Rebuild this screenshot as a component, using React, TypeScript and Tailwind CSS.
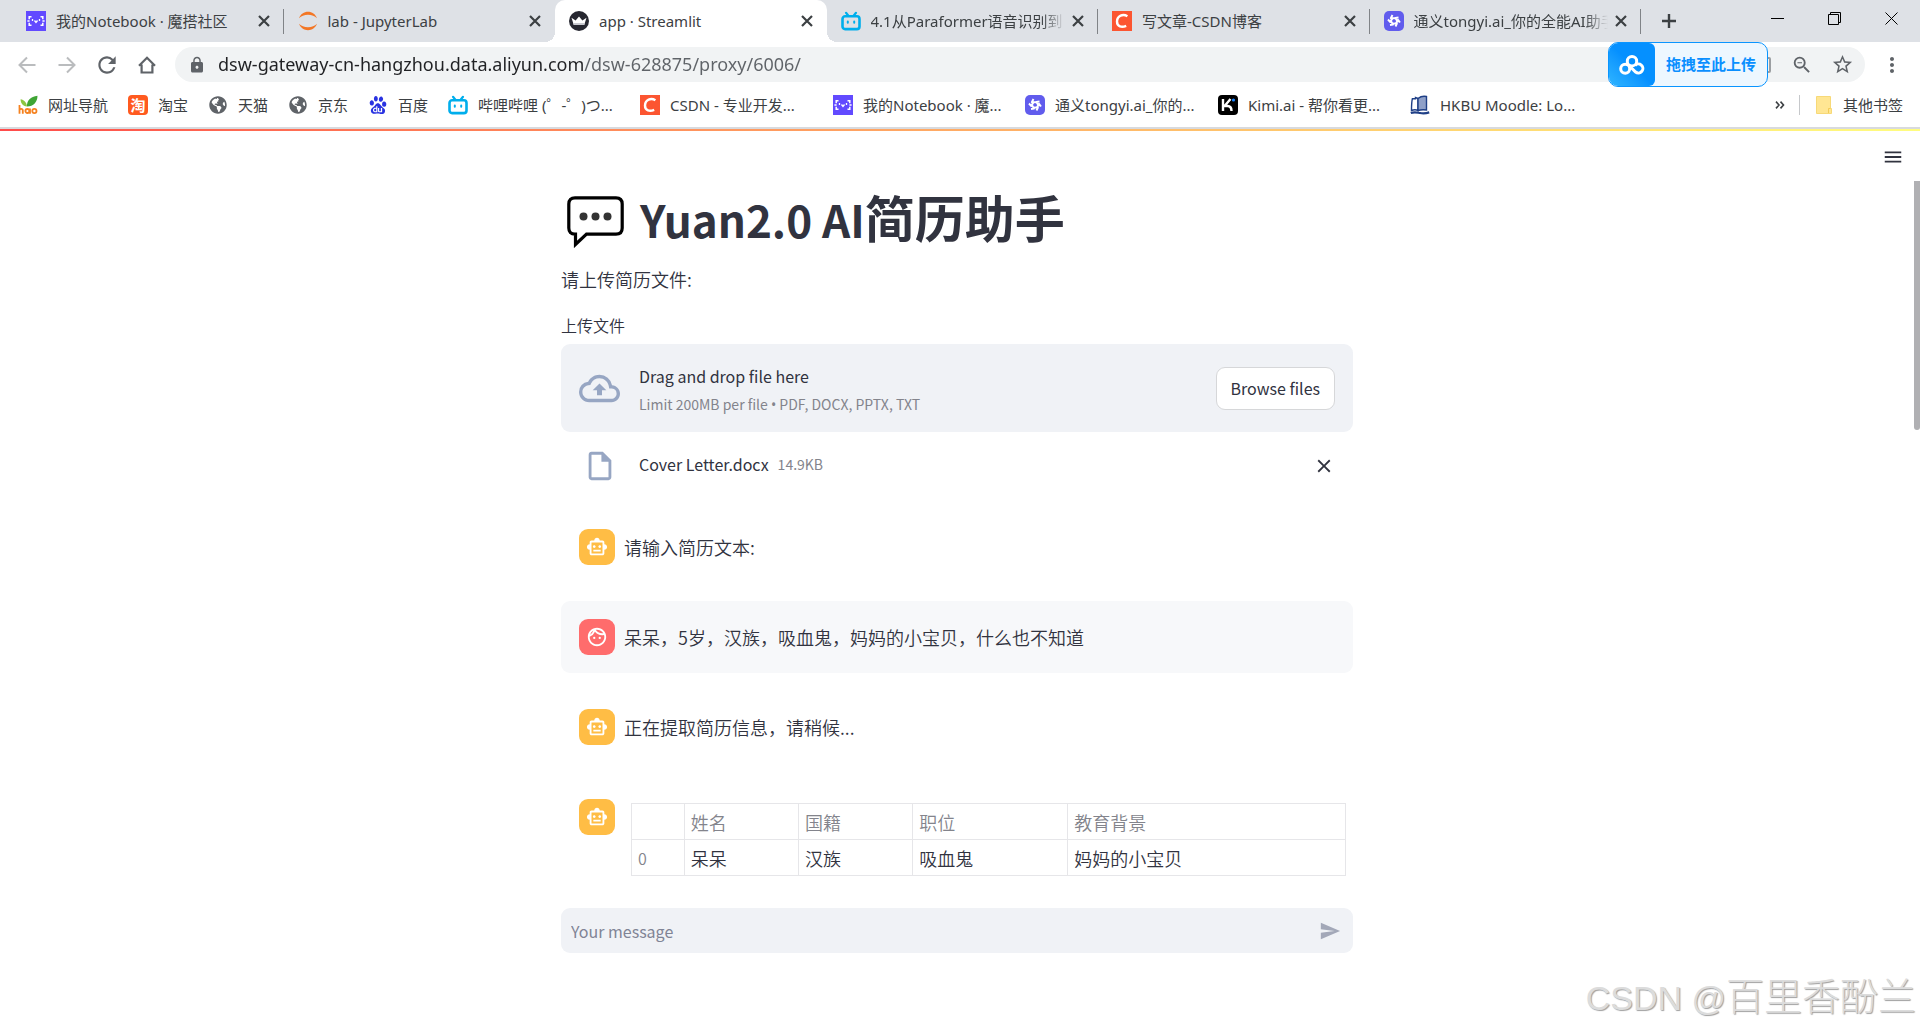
import type { ReactNode } from "react"
import {
  MdClose,
  MdMenu,
  MdMoreVert,
  MdLock,
  MdRefresh,
  MdSend,
  MdStarBorder,
  MdZoomOut,
  MdOutlineCloudUpload,
  MdOutlineFace,
  MdOutlineInsertDriveFile,
  MdOutlineSmartToy,
} from "react-icons/md"
import { FaGlobeAmericas } from "react-icons/fa"
import { SiBaidu } from "react-icons/si"

/* ---------- Site icons ---------- */

function NotebookIcon() {
  return (
    <svg viewBox="0 0 20 20" className="size-5 shrink-0" fill="none">
      <rect width="20" height="20" fill="#624aff" />
      <path
        d="M5.500 5.800H3.200v2.500M1.400 10h2.200M3.200 11.700v2.500h2.300M14.500 5.800h2.300v2.500M16.400 10h2.200M16.800 11.700v2.500h-2.300"
        stroke="#fff"
        strokeWidth="1.500"
      />
      <path d="M6.500 8v2M13.500 8v2M8.500 9.500 10 11.500l1.500-2" stroke="#fff" strokeWidth="1.300" />
    </svg>
  )
}

function JupyterIcon() {
  return (
    <svg viewBox="0 0 20 20" className="size-5 shrink-0" fill="#f37726">
      <path d="M1 7.200C2.600 3 6 .8 10 .8S17.400 3 19 7.200C16.800 4.900 13.700 3.700 10 3.700S3.200 4.900 1 7.200Z" />
      <path d="M1 12.800C2.600 17 6 19.200 10 19.200s7.400-2.200 9-6.400c-2.200 2.300-5.300 3.500-9 3.500S3.200 15.100 1 12.800Z" />
    </svg>
  )
}

function CrownIcon() {
  return (
    <svg viewBox="0 0 20 20" className="size-5 shrink-0">
      <circle cx="10" cy="10" r="10" fill="#262730" />
      <path d="M2.500 6.800 6.600 9.500 10 5.600l3.400 3.900 4.100-2.700-2.300 7.200H4.800Z" fill="#fff" />
      <path d="M4.200 12h11.600l-.6 2H4.800Z" fill="#c9cad0" />
    </svg>
  )
}

function BilibiliIcon() {
  return (
    <svg viewBox="0 0 20 20" className="size-5 shrink-0" fill="none" stroke="#00aeec" strokeWidth="2.600" strokeLinecap="round">
      <rect x="1.500" y="5.300" width="17" height="12.800" rx="2.600" />
      <path d="M5 1.800 7.200 4.500M15 1.800 12.800 4.500" strokeWidth="2.200" />
      <path d="M6.800 10.400v1.400M13.200 10.400v1.400" strokeWidth="2" />
    </svg>
  )
}

function CsdnIcon() {
  return (
    <svg viewBox="0 0 20 20" className="size-5 shrink-0" fill="none">
      <rect width="20" height="20" fill="#fc5531" />
      <path d="M15.400 5.300C11 2.600 5.200 4.600 5 10.600c0 5.200 4.800 6.200 9.200 4.200" stroke="#fff" strokeWidth="2.400" />
    </svg>
  )
}

function TongyiIcon() {
  return (
    <svg viewBox="0 0 20 20" className="size-5 shrink-0" fill="none">
      <rect width="20" height="20" rx="5" fill="#615ced" />
      <g stroke="#fff" strokeWidth="1.900" strokeLinejoin="round">
        <path d="M8.500 4 6.800 7.200h5.700M14.500 6.500l-3.200.4 2.600 4.600M16 11.500l-2-2.700-2.800 4.800M11.500 15.500l1.400-3H7.300M6 14l3-.4-2.600-4.800M4 8.500l2.300 2.600 2.400-4" />
      </g>
      <circle cx="10" cy="10" r="1.300" fill="#615ced" />
    </svg>
  )
}

function HaoIcon() {
  return (
    <svg viewBox="0 0 20 20" className="size-5 shrink-0">
      <path d="M9 11.500C4.500 11 2.500 7.500 2.600 4.200 6 5 8.500 7 9 11.500Z" fill="#8cc63f" />
      <path d="M9 11.500C8.500 6 12.500 1.500 19.500.8 19.500 7 15.500 11.500 9 11.500Z" fill="#3fa535" />
      <g fill="none" stroke="#f58220" strokeWidth="1.800">
        <path d="M1.500 10v8.800M1.500 15.500c0-2.300 3.300-2.300 3.300 0v3.300" />
        <circle cx="9.400" cy="16" r="2" />
        <path d="M12 13.500v5.300" />
        <circle cx="16.400" cy="16" r="2.100" />
      </g>
    </svg>
  )
}

function TaobaoIcon() {
  return (
    <span className="flex size-5 shrink-0 items-center justify-center rounded-sm bg-[#ff5a1f] text-[15px] leading-none font-bold text-white">
      淘
    </span>
  )
}

function GlobeIcon() {
  return (
    <span className="flex size-5 shrink-0 items-center justify-center">
      <FaGlobeAmericas className="size-[18px] text-[#5f6368]" />
    </span>
  )
}

function BaiduIcon() {
  return (
    <span className="flex size-5 shrink-0 items-center justify-center">
      <SiBaidu className="size-[18px] text-[#2932e1]" />
    </span>
  )
}

function KimiIcon() {
  return (
    <svg viewBox="0 0 20 20" className="size-5 shrink-0">
      <rect width="20" height="20" rx="4" fill="#000" />
      <path d="M5 4v12M5.500 11h4c3 0 4 1.500 4 5M7 10.500 12.500 4" fill="none" stroke="#fff" strokeWidth="2.400" />
      <circle cx="15.500" cy="5" r="1.600" fill="#1783ff" />
    </svg>
  )
}

function MoodleIcon() {
  return (
    <svg viewBox="0 0 20 20" className="size-5 shrink-0" fill="none" stroke="#1f3f86" strokeWidth="1.400">
      <path d="M8 3.500 5.500 2.500v1.200H2.500v-.5c-1 3.500-1 8-1 12.300C4 14.500 6 14.500 8 15.500Z" />
      <path d="M8 3.500C10.500 1.500 13.500.8 16.500 1.500v13.500c-3-.5-6-.3-8.500.5Z" fill="#8fa0c8" />
      <path d="M.8 18c4-1.600 7-.3 9.200 0 3 .5 6 .4 9.200-.6" strokeWidth="2.200" />
    </svg>
  )
}

/* ---------- Browser chrome ---------- */

type Tab = { title: string; icon: ReactNode; active?: boolean; divider?: boolean; fade?: boolean }

const TABS: Tab[] = [
  { title: "我的Notebook · 魔搭社区", icon: <NotebookIcon />, divider: true },
  { title: "lab - JupyterLab", icon: <JupyterIcon /> },
  { title: "app · Streamlit", icon: <CrownIcon />, active: true },
  { title: "4.1从Paraformer语音识别到", icon: <BilibiliIcon />, divider: true, fade: true },
  { title: "写文章-CSDN博客", icon: <CsdnIcon />, divider: true },
  { title: "通义tongyi.ai_你的全能AI助手", icon: <TongyiIcon />, divider: true, fade: true },
]

const BOOKMARKS = [
  { label: "网址导航", icon: <HaoIcon />, width: "w-[110px]" },
  { label: "淘宝", icon: <TaobaoIcon />, width: "w-20" },
  { label: "天猫", icon: <GlobeIcon />, width: "w-20" },
  { label: "京东", icon: <GlobeIcon />, width: "w-20" },
  { label: "百度", icon: <BaiduIcon />, width: "w-20" },
  { label: "哔哩哔哩 (゜-゜)つ...", icon: <BilibiliIcon />, width: "w-48" },
  { label: "CSDN - 专业开发...", icon: <CsdnIcon />, width: "w-[193px]" },
  { label: "我的Notebook · 魔...", icon: <NotebookIcon />, width: "w-48" },
  { label: "通义tongyi.ai_你的...", icon: <TongyiIcon />, width: "w-[193px]" },
  { label: "Kimi.ai - 帮你看更...", icon: <KimiIcon />, width: "w-48" },
  { label: "HKBU Moodle: Lo...", icon: <MoodleIcon />, width: "w-48" },
]

function TabItem({ tab }: { tab: Tab }) {
  return (
    <div
      className={`relative flex min-w-0 flex-1 items-center pr-[11px] pl-[14px] ${
        tab.active ? "rounded-t-[10px] bg-white" : ""
      }`}
    >
      {tab.icon}
      <span
        className={`ml-[10px] min-w-0 flex-1 overflow-hidden text-[15px] leading-5 whitespace-nowrap text-[#3c4043] ${
          tab.fade ? "mask-r-from-88% mask-r-to-100%" : ""
        }`}
      >
        {tab.title}
      </span>
      <button aria-label="关闭标签页" className="ml-1 text-[#3c4043]">
        <svg viewBox="0 0 18 18" className="size-[18px]" stroke="currentColor" strokeWidth="2.200">
          <path d="m4 4 10 10M14 4 4 14" />
        </svg>
      </button>
      {tab.divider && <span className="absolute top-[9px] right-0 h-[25px] w-px bg-[#808387]" />}
      {/* Flared feet of the active tab */}
      {tab.active && (
        <>
          <span className="absolute bottom-0 -left-[10px] size-[10px] bg-[radial-gradient(circle_at_0_0,transparent_10px,white_10px)]" />
          <span className="absolute -right-[10px] bottom-0 size-[10px] bg-[radial-gradient(circle_at_100%_0,transparent_10px,white_10px)]" />
        </>
      )}
    </div>
  )
}

function TabStrip() {
  return (
    <div className="flex h-[42px] bg-[#dee1e6] pl-3">
      <div className="flex min-w-0 flex-1">
        {TABS.map((tab) => (
          <TabItem key={tab.title} tab={tab} />
        ))}
      </div>
      <div className="flex w-[279px] shrink-0 justify-between">
        <button aria-label="新标签页" className="flex w-14 items-center justify-center">
          <svg viewBox="0 0 16 16" className="size-4" stroke="#3c4043" strokeWidth="2.400">
            <path d="M8 1v14M1 8h14" />
          </svg>
        </button>
        <div className="flex h-9">
          <button aria-label="最小化" className="flex w-[57px] items-center justify-center">
            <svg viewBox="0 0 13 13" className="size-[13px]" fill="none" stroke="#000">
              <path d="M0 6.500h13" />
            </svg>
          </button>
          <button aria-label="还原" className="flex w-[57px] items-center justify-center">
            <svg viewBox="0 0 13 13" className="size-[13px]" fill="none" stroke="#000">
              <path d="M.5 2.500h10v10H.500ZM2.500 2.500v-2h10v10h-2" />
            </svg>
          </button>
          <button aria-label="关闭" className="flex w-[57px] items-center justify-center">
            <svg viewBox="0 0 13 13" className="size-[13px]" fill="none" stroke="#000">
              <path d="M.5.5l12 12M12.500.5l-12 12" />
            </svg>
          </button>
        </div>
      </div>
    </div>
  )
}

function Toolbar() {
  return (
    <div className="relative flex h-[45px] items-center pr-4 pl-[7px]">
      <button aria-label="后退" className="flex w-10 justify-center text-[#babcbe]">
        <svg viewBox="0 0 18 18" className="size-[18px]" fill="none" stroke="currentColor" strokeWidth="2">
          <path d="M17.500 9H2M9 1.500 1.500 9 9 16.500" />
        </svg>
      </button>
      <button aria-label="前进" className="flex w-10 justify-center text-[#babcbe]">
        <svg viewBox="0 0 18 18" className="size-[18px]" fill="none" stroke="currentColor" strokeWidth="2">
          <path d="M.5 9H16M9 1.500 16.500 9 9 16.500" />
        </svg>
      </button>
      <button aria-label="重新加载" className="flex w-10 justify-center text-[#5f6368]">
        <MdRefresh className="size-[26px]" />
      </button>
      <button aria-label="主页" className="flex w-10 justify-center text-[#5f6368]">
        <svg viewBox="0 0 18 18" className="size-[18px]" fill="none" stroke="currentColor" strokeWidth="2.200">
          <path d="M1 9.800 9 1.800l8 8M3.600 8.500v8h10.800v-8" />
        </svg>
      </button>
      <div className="ml-2 flex h-[35px] min-w-0 flex-1 items-center rounded-full bg-[#f1f3f4] pr-[11px] pl-[13px] text-[#5f6368]">
        <MdLock className="size-[18px] shrink-0" />
        <input
          aria-label="地址"
          defaultValue="dsw-gateway-cn-hangzhou.data.aliyun.com/dsw-628875/proxy/6006/"
          className="ml-3 min-w-0 flex-1 bg-linear-[90deg,#202124_365px,#5f6368_365px] bg-clip-text pb-0.5 text-lg text-transparent outline-none"
        />
        <button aria-label="翻译" className="mr-5 h-4 w-3 rounded-xs border-2 border-[#9b9ea1]" />
        <button aria-label="缩放" className="mr-[18px]">
          <MdZoomOut className="size-[22px]" />
        </button>
        <button aria-label="收藏">
          <MdStarBorder className="size-[23px]" />
        </button>
      </div>
      <button aria-label="更多" className="ml-[15px] text-[#5f6368]">
        <MdMoreVert className="size-6" />
      </button>

      {/* Drop target of the cloud drive client, floating over the address bar */}
      <button className="absolute top-0 right-[152px] flex h-[45px] w-40 items-center overflow-hidden rounded-[10px] border border-[#0a95ff] bg-[#edf7ff]">
        <span className="flex h-full w-[46px] items-center justify-center rounded-r-md bg-linear-to-tr from-[#2fb5ff] to-[#0590ff] to-50%">
          <svg viewBox="0 0 26 20" className="h-5 w-[26px]" fill="none" stroke="#fff" strokeWidth="3">
            <circle cx="13" cy="6.200" r="4.700" />
            <circle cx="6.200" cy="13.800" r="4.500" />
            <path d="M16 10.500a4.500 4.500 0 1 1 .6 6.500L10 10.500" />
          </svg>
        </span>
        <span className="flex-1 text-[15px] font-bold text-[#0a8fff]">拖拽至此上传</span>
      </button>
    </div>
  )
}

function BookmarksBar() {
  return (
    <nav aria-label="书签" className="flex h-10 items-center pr-[17px] pb-1 pl-[18px] text-[15px] leading-5 text-[#3c4043]">
      {BOOKMARKS.map((bookmark) => (
        <a
          key={bookmark.label}
          href="#"
          className={`flex shrink-0 items-center gap-[10px] whitespace-nowrap ${bookmark.width}`}
        >
          {bookmark.icon}
          {bookmark.label}
        </a>
      ))}
      <button aria-label="更多书签" className="ml-auto">
        <svg viewBox="0 0 10 8" className="h-2 w-[10px]" fill="none" stroke="#3c4043" strokeWidth="1.600">
          <path d="m1 .6 3 3.400-3 3.400M5.500.6l3 3.400-3 3.400" />
        </svg>
      </button>
      <span className="mr-4 ml-[14px] h-5 w-px bg-[#c6c8cb]" />
      <a href="#" className="flex items-center gap-[11px]">
        <svg viewBox="0 0 16 18" className="h-[18px] w-4">
          <path d="M.5.5h14v12h1v5H.500Z" fill="#ffe693" stroke="#f7d978" />
          <path d="M12.500 17v-4.500h2" fill="none" stroke="#f2cb57" />
        </svg>
        其他书签
      </a>
    </nav>
  )
}

/* ---------- Streamlit app ---------- */

function SpeechBubble() {
  return (
    <svg viewBox="0 0 57 52" className="mt-[11px] mr-4 ml-1.5 h-[52px] w-[57px]" fill="none">
      <path
        d="M8 1.800h41c4 0 6.200 2.200 6.200 6.200v24c0 4-2.200 6.200-6.200 6.200H19.500L8.500 48.500V38.200H8C4 38.200 1.800 36 1.800 32V8C1.800 4 4 1.800 8 1.800Z"
        stroke="#000"
        strokeWidth="3.200"
      />
      <g fill="#333">
        <circle cx="16.500" cy="20.500" r="4" />
        <circle cx="28.500" cy="20.500" r="4" />
        <circle cx="40.500" cy="20.500" r="4" />
      </g>
    </svg>
  )
}

function FileUploader() {
  return (
    <section className="mt-5">
      <label htmlFor="resume" className="block text-[16px] leading-6 font-[350]">
        上传文件
      </label>
      <input id="resume" type="file" className="hidden" />
      <div className="mt-[7px] flex h-[88px] items-center rounded-[9px] bg-[#f0f2f6] px-[18px]">
        <MdOutlineCloudUpload className="size-[41px] text-[#97a6c3]" />
        <div className="ml-[19px] flex-1 pt-1">
          <p className="text-[16px] leading-7">Drag and drop file here</p>
          <p className="text-[14px] leading-7 text-[#83848c]">
            Limit 200MB per file <span className="font-['Noto_Sans']">•</span> PDF, DOCX, PPTX, TXT
          </p>
        </div>
        <button className="h-[43px] rounded-[9px] border border-[#d6d7d9] bg-white px-[14px] text-[16px]">
          Browse files
        </button>
      </div>
      <div className="flex h-[68px] items-center pr-[18px] pl-[22px]">
        <MdOutlineInsertDriveFile className="size-[34px] text-[#97a6c3]" />
        <span className="ml-[22px] pb-1 text-[16px]">Cover Letter.docx</span>
        <span className="ml-[9px] flex-1 pb-1 text-[14px] text-[#83848c]">14.9KB</span>
        <button aria-label="删除文件">
          <MdClose className="size-[22px]" />
        </button>
      </div>
    </section>
  )
}

function ChatMessage({ user, children }: { user?: boolean; children: ReactNode }) {
  return (
    <div className={`flex gap-[9px] rounded-[9px] p-[18px] ${user ? "bg-[#f7f8fa]" : ""}`}>
      <div
        className={`flex size-9 shrink-0 items-center justify-center rounded-[9px] text-white ${
          user ? "bg-[#ff6c6c]" : "bg-[#ffbd45]"
        }`}
      >
        {user ? <MdOutlineFace className="size-[22px]" /> : <MdOutlineSmartToy className="size-[22px]" />}
      </div>
      {children}
    </div>
  )
}

const COLUMNS = ["姓名", "国籍", "职位", "教育背景"]
const ROWS = [["呆呆", "汉族", "吸血鬼", "妈妈的小宝贝"]]

function ResumeTable() {
  const cell = "h-9 border border-[#e6e6e9] px-1.5 text-left font-[350]"

  return (
    <table className="mt-1 mr-[-11px] ml-[7px] flex-1 table-fixed border-collapse text-[18px] leading-7">
      <thead>
        <tr className="text-[#83848c]">
          <th className={`${cell} w-[7.4%]`} />
          {COLUMNS.map((column) => (
            <th
              key={column}
              className={`${cell} ${column === "职位" ? "w-[21.7%]" : column === "教育背景" ? "" : "w-[16%]"}`}
            >
              {column}
            </th>
          ))}
        </tr>
      </thead>
      <tbody>
        {ROWS.map((row, index) => (
          <tr key={index}>
            <th className={`${cell} text-[16px] text-[#83848c]`}>{index}</th>
            {row.map((value) => (
              <td key={value} className={cell}>
                {value}
              </td>
            ))}
          </tr>
        ))}
      </tbody>
    </table>
  )
}

function ChatInput() {
  return (
    <form className="mt-[14px] flex h-[45px] items-center rounded-[9px] bg-[#f0f2f6] pr-3 pl-[10px]">
      <input
        aria-label="Your message"
        placeholder="Your message"
        className="min-w-0 flex-1 text-[16px] outline-none placeholder:text-[#808495]"
      />
      <button type="button" aria-label="发送">
        <MdSend className="size-[22px] text-[#a3a8b8]" />
      </button>
    </form>
  )
}

export default function App() {
  return (
    <div className="relative flex min-h-screen flex-col bg-white font-['Noto_Sans','Noto_Sans_CJK_SC',sans-serif]">
      <header>
        <TabStrip />
        <Toolbar />
        <BookmarksBar />
        <div className="h-0.5 bg-[#d8dade]" />
      </header>

      <div className="relative flex-1 pr-1.5 font-['Noto_Sans_CJK_SC',sans-serif] text-[#31333f]">
        <div className="absolute inset-x-0 top-0 h-0.5 bg-linear-to-r from-[#ff4b4b] to-[#fffd80]" />
        <button aria-label="菜单" className="absolute top-[17px] right-4">
          <MdMenu className="size-[22px]" />
        </button>
        <div className="absolute top-[52px] right-0 h-[249px] w-1.5 rounded-b-sm bg-[#b0b0b3]" />

        <main className="mx-auto max-w-[792px] pt-[54px]">
          <h1 className="flex h-[66px] items-center text-[44px] leading-none font-bold">
            <SpeechBubble />
            <span>
              Yuan2.0 AI<span className="text-[50px]">简历助手</span>
            </span>
          </h1>
          <p className="mt-4 text-[18px] leading-7 font-[350]">请上传简历文件:</p>
          <FileUploader />
          <div className="mt-[11px] flex flex-col gap-[18px] text-[18px] leading-9 font-[350]">
            <ChatMessage>
              <p>请输入简历文本:</p>
            </ChatMessage>
            <ChatMessage user>
              <p>呆呆，5岁，汉族，吸血鬼，妈妈的小宝贝，什么也不知道</p>
            </ChatMessage>
            <ChatMessage>
              <p>正在提取简历信息，请稍候...</p>
            </ChatMessage>
            <ChatMessage>
              <ResumeTable />
            </ChatMessage>
          </div>
          <ChatInput />
        </main>
      </div>

      <p className="absolute right-1 bottom-2 font-['Liberation_Sans','Noto_Sans_CJK_SC',sans-serif] text-[34px] leading-12 font-light text-[#dcdcdc] [text-shadow:1px_1px_1px_#a0a0a0]">
        CSDN @<span className="text-[38px]">百里香酚兰</span>
      </p>
    </div>
  )
}
